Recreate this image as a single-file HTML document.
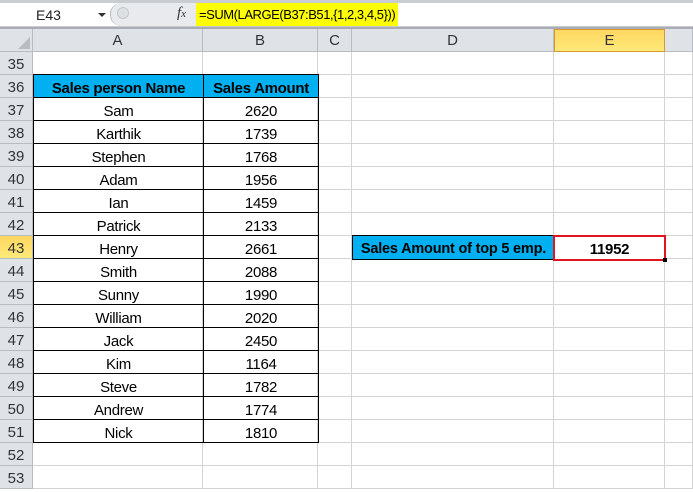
<!DOCTYPE html><html><head><style>
body{margin:0;width:693px;height:478px;overflow:hidden;background:#fff;font-family:"Liberation Sans",Calibri,sans-serif;position:relative}
.a{position:absolute;box-sizing:border-box;white-space:nowrap}
.hd{background:#dfe3e8;color:#333;font-size:15px;text-align:center;border-right:1px solid #b8bcc2;border-bottom:1px solid #b8bcc2}
.c{font-size:15px;letter-spacing:-0.3px;text-align:center;color:#000}
</style></head><body>
<div class="a" style="left:0;top:0;width:693px;height:3px;background:#c9ccd1"></div>
<div class="a" style="left:0;top:3px;width:693px;height:23px;background:#fff"></div>
<div class="a" style="left:0;top:26px;width:693px;height:3px;background:#a9adb3;border-top:1px solid #c6c9ce"></div>
<div class="a" style="left:36px;top:7px;font-size:14px;color:#222">E43</div>
<div class="a" style="left:98px;top:13px;width:0;height:0;border-left:4px solid transparent;border-right:4px solid transparent;border-top:4px solid #333"></div>
<div class="a" style="left:110px;top:3px;width:86px;height:23px;background:#e8eaed;border-radius:11px 0 0 11px;border-left:1px solid #b4b8bd"></div>
<div class="a" style="left:117px;top:7px;width:12px;height:12px;border-radius:50%;background:#dde0e3;border:1px solid #c4c7cb"></div>
<div class="a" style="left:177px;top:5px;font-family:'Liberation Serif',serif;font-style:italic;font-size:15px;color:#333">f<span style="font-size:11px">x</span></div>
<div class="a" style="left:196px;top:3px;width:202px;height:23px;background:#ffff00;font-size:13px;letter-spacing:-0.45px;padding:4px 0 0 3px;color:#000;overflow:hidden">=SUM(LARGE(B37:B51,{1,2,3,4,5}))</div>
<div class="a hd" style="left:0;top:29px;width:33px;height:23px"></div>
<div class="a" style="left:18px;top:37px;width:0;height:0;border-left:12px solid transparent;border-bottom:12px solid #b9bdc2"></div>
<div class="a hd" style="left:33px;top:29px;width:170px;height:23px;line-height:24px">A</div>
<div class="a hd" style="left:203px;top:29px;width:115px;height:23px;line-height:24px">B</div>
<div class="a hd" style="left:318px;top:29px;width:34px;height:23px;line-height:24px">C</div>
<div class="a hd" style="left:352px;top:29px;width:202px;height:23px;line-height:24px">D</div>
<div class="a hd" style="left:554px;top:29px;width:111px;height:23px;line-height:22px;background:linear-gradient(#fdd760,#fee97a);border:1px solid #d79a30">E</div>
<div class="a hd" style="left:665px;top:29px;width:28px;height:23px"></div>
<div id="g"></div>
<script>
var names=["","Sales person Name","Sam","Karthik","Stephen","Adam","Ian","Patrick","Henry","Smith","Sunny","William","Jack","Kim","Steve","Andrew","Nick","",""];
var vals=["","Sales Amount","2620","1739","1768","1956","1459","2133","2661","2088","1990","2020","2450","1164","1782","1774","1810","",""];
var h="";var cols=[33,203,318,352,554,665,693];
for(var i=0;i<19;i++){var y=52+i*23;var r=35+i;
h+='<div class="a hd" style="left:0;top:'+y+'px;width:33px;height:23px;line-height:26px;'+(r==43?'background:linear-gradient(#fdd760,#fee97a);':'')+'">'+r+'</div>';
for(var j=0;j<6;j++)h+='<div class="a" style="left:'+cols[j]+'px;top:'+y+'px;width:'+(cols[j+1]-cols[j])+'px;height:23px;border-right:1px solid #d4d4d4;border-bottom:1px solid #d4d4d4"></div>';
if(i>=1&&i<=16){var hdr=i==1;var st=hdr?'background:#00b0f0;font-weight:bold;':'';
h+='<div class="a c" style="left:33px;top:'+(y-1)+'px;width:171px;height:24px;line-height:27px;border:1px solid #000;'+st+'">'+names[i]+'</div>';
h+='<div class="a c" style="left:203px;top:'+(y-1)+'px;width:116px;height:24px;line-height:27px;border:1px solid #000;'+st+'">'+vals[i]+'</div>';}
}
document.getElementById('g').innerHTML=h;
</script>
<div class="a c" style="left:352px;top:235px;width:203px;height:25px;line-height:26px;background:#00b0f0;font-weight:bold;font-size:14.5px;letter-spacing:-0.2px;border:1px solid #000;overflow:hidden">Sales Amount of top 5 emp.</div>
<div class="a c" style="left:553px;top:235px;width:113px;height:26px;line-height:25px;font-weight:bold;border:2px solid #e0141c;background:#fff">11952</div>
<div class="a" style="left:663px;top:258px;width:4px;height:4px;background:#000"></div>
</body></html>
